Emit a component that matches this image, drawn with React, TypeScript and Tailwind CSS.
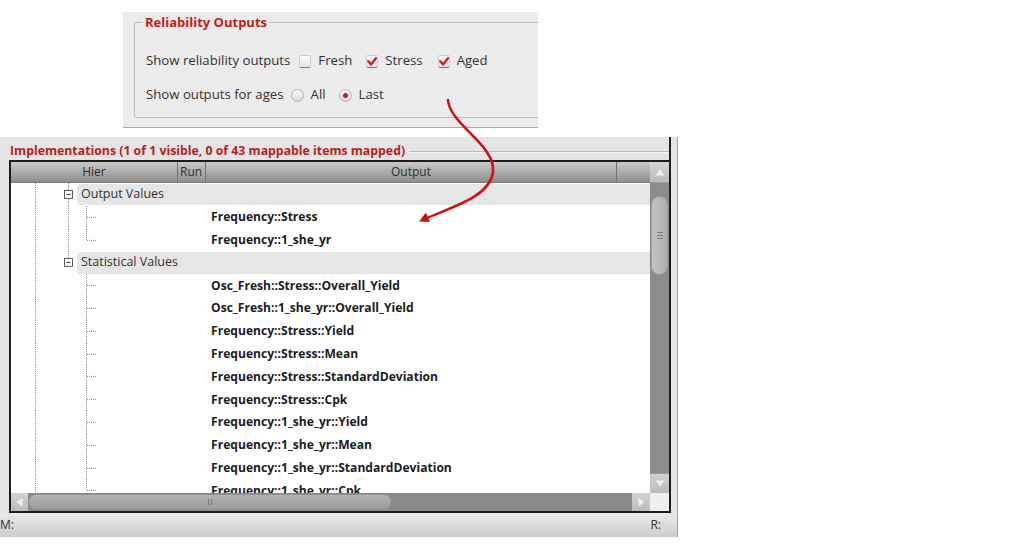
import React from "react";

type Row = { kind: "group" | "child"; text: string; last?: boolean; parentLast?: boolean };

const rows: Row[] = [
  { kind: "group", text: "Output Values", last: false },
  { kind: "child", text: "Frequency::Stress", parentLast: false },
  { kind: "child", text: "Frequency::1_she_yr", parentLast: false, last: true },
  { kind: "group", text: "Statistical Values", last: true },
  { kind: "child", text: "Osc_Fresh::Stress::Overall_Yield", parentLast: true },
  { kind: "child", text: "Osc_Fresh::1_she_yr::Overall_Yield", parentLast: true },
  { kind: "child", text: "Frequency::Stress::Yield", parentLast: true },
  { kind: "child", text: "Frequency::Stress::Mean", parentLast: true },
  { kind: "child", text: "Frequency::Stress::StandardDeviation", parentLast: true },
  { kind: "child", text: "Frequency::Stress::Cpk", parentLast: true },
  { kind: "child", text: "Frequency::1_she_yr::Yield", parentLast: true },
  { kind: "child", text: "Frequency::1_she_yr::Mean", parentLast: true },
  { kind: "child", text: "Frequency::1_she_yr::StandardDeviation", parentLast: true },
  { kind: "child", text: "Frequency::1_she_yr::Cpk", parentLast: true, last: true },
];

const DOT = { stroke: "#8a8a8a", strokeWidth: 1, strokeDasharray: "1 1" };

function CheckBox({ checked }: { checked: boolean }) {
  return (
    <span className="inline-flex items-center justify-center w-[12px] h-[13px] rounded-[2px] border border-[#cfcfcf] border-b-[#7c7c7c] bg-linear-to-b from-[#fbfbfb] to-[#e4e4e4] shrink-0">
      {checked && (
        <svg width="10" height="9" viewBox="0 0 10 9">
          <path d="M1.2 4.2 L4 7.4 L9 1.2" stroke="#d41515" strokeWidth="2.2" fill="none" strokeLinecap="round" />
        </svg>
      )}
    </span>
  );
}

function Radio({ checked }: { checked: boolean }) {
  return (
    <span className="inline-flex items-center justify-center w-[13px] h-[13px] rounded-full border border-[#b4b4b4] bg-linear-to-b from-[#fdfdfd] to-[#dadada] shrink-0">
      {checked && <span className="w-[5px] h-[5px] rounded-full bg-[#d41515]" />}
    </span>
  );
}

function GroupRow({ r }: { r: Row }) {
  return (
    <div className="flex h-[22.8px]">
      <svg width="66" className="h-full shrink-0" viewBox="0 0 66 23" preserveAspectRatio="none">
        <line x1="24.5" y1="0" x2="24.5" y2="23" {...DOT} />
        <line x1="57.5" y1="0" x2="57.5" y2="7" {...DOT} />
        {!r.last && <line x1="57.5" y1="16" x2="57.5" y2="23" {...DOT} />}
        <rect x="53.5" y="7.5" width="8" height="8" fill="#fff" stroke="#5a5a5a" strokeWidth="1" />
        <line x1="55.5" y1="11.5" x2="59.5" y2="11.5" stroke="#333" strokeWidth="1" />
      </svg>
      <div className="flex-1 my-[0.5px] rounded-l-[4px] bg-[#e6e6e6] pl-[4px] flex items-center text-[12.5px] text-[#333]">
        {r.text}
      </div>
    </div>
  );
}

function ChildRow({ r }: { r: Row }) {
  return (
    <div className="flex h-[22.8px] items-center">
      <svg width="200" className="h-full shrink-0" viewBox="0 0 200 23" preserveAspectRatio="none">
        <line x1="24.5" y1="0" x2="24.5" y2="23" {...DOT} />
        {!r.parentLast && <line x1="57.5" y1="0" x2="57.5" y2="23" {...DOT} />}
        <line x1="75.5" y1="0" x2="75.5" y2={r.last ? 11.5 : 23} {...DOT} />
        <line x1="76" y1="11.5" x2="86" y2="11.5" {...DOT} />
      </svg>
      <span className="font-bold text-[12.1px] text-[#1c1c1c] whitespace-nowrap">{r.text}</span>
    </div>
  );
}

function TopPanel() {
  return (
    <div className="ml-[123px] mt-[12px] w-[415px] h-[116px] bg-[#ececec] border-b border-[#a9a9a9] pt-[1px] pl-[11px] overflow-hidden">
      <fieldset className="w-[420px] border border-[#bdbdbd] rounded-[3px] pb-[5px]">
        <legend className="ml-[8px] px-[2px] text-[13px] leading-[18px] font-bold text-[#c81c1c]">Reliability Outputs</legend>
        <div className="pt-[13px] pl-[11px] text-[13.2px] text-[#333]">
          <div className="h-[34px] flex items-center">
            <span>Show reliability outputs</span>
            <span className="ml-[9px] flex"><CheckBox checked={false} /></span>
            <span className="ml-[7px]">Fresh</span>
            <span className="ml-[14px] flex"><CheckBox checked /></span>
            <span className="ml-[7px]">Stress</span>
            <span className="ml-[15px] flex"><CheckBox checked /></span>
            <span className="ml-[7px]">Aged</span>
          </div>
          <div className="h-[34px] flex items-center">
            <span>Show outputs for ages</span>
            <span className="ml-[7px] flex"><Radio checked={false} /></span>
            <span className="ml-[7px]">All</span>
            <span className="ml-[13px] flex"><Radio checked /></span>
            <span className="ml-[7px]">Last</span>
          </div>
        </div>
      </fieldset>
    </div>
  );
}

function VScroll() {
  return (
    <div className="w-[19px] flex flex-col shrink-0">
      <div className="h-[21px] bg-linear-to-b from-[#d4d4d4] to-[#bcbcbc] flex items-center justify-center border-b border-[#9a9a9a]">
        <svg width="10" height="7" viewBox="0 0 10 7"><path d="M5 0.5 L9.5 6.5 L0.5 6.5 Z" fill="#efefef" /></svg>
      </div>
      <div className="flex-1 bg-[#8c8c8c] pt-[13px] px-[1px]">
        <div className="h-[79px] rounded-full bg-linear-to-r from-[#c4c4c4] to-[#aeaeae] border border-[#9c9c9c] flex flex-col items-center justify-center gap-[2px]">
          <span className="w-[6px] h-px bg-[#7c7c7c]" />
          <span className="w-[6px] h-px bg-[#7c7c7c]" />
          <span className="w-[6px] h-px bg-[#7c7c7c]" />
        </div>
      </div>
      <div className="h-[20px] bg-linear-to-b from-[#d0d0d0] to-[#bcbcbc] flex items-center justify-center border-t border-[#9a9a9a]">
        <svg width="10" height="7" viewBox="0 0 10 7"><path d="M0.5 0.5 L9.5 0.5 L5 6.5 Z" fill="#efefef" /></svg>
      </div>
      <div className="h-[18px] bg-[#efefef]" />
    </div>
  );
}

function HScroll() {
  return (
    <div className="h-[18px] flex bg-[#8a8a8a]">
      <div className="w-[17px] bg-linear-to-b from-[#d2d2d2] to-[#bcbcbc] flex items-center justify-center">
        <svg width="7" height="10" viewBox="0 0 7 10"><path d="M0.5 5 L6.5 0.5 L6.5 9.5 Z" fill="#efefef" /></svg>
      </div>
      <div className="w-[364px] my-[1px] rounded-full bg-linear-to-b from-[#b4b4b4] to-[#9c9c9c] border border-[#8f8f8f] flex items-center justify-center gap-[2px]">
        <span className="w-px h-[6px] bg-[#7a7a7a]" />
        <span className="w-px h-[6px] bg-[#7a7a7a]" />
      </div>
      <div className="flex-1" />
      <div className="w-[18px] bg-linear-to-b from-[#d2d2d2] to-[#bcbcbc] flex items-center justify-center">
        <svg width="7" height="10" viewBox="0 0 7 10"><path d="M0.5 0.5 L6.5 5 L0.5 9.5 Z" fill="#efefef" /></svg>
      </div>
    </div>
  );
}

function Header() {
  return (
    <div className="h-[21px] flex bg-linear-to-b from-[#c9c9c9] via-[#acacac] to-[#8e8e8e] text-[12px] text-[#2e2e2e] border-b border-[#7a7a7a]">
      <div className="w-[167px] flex items-center justify-center border-r border-[#727272]">Hier</div>
      <div className="w-[28px] flex items-center pl-[2px] border-r border-[#727272]">Run</div>
      <div className="w-[411px] flex items-center justify-center border-r border-[#727272]">Output</div>
      <div className="flex-1" />
    </div>
  );
}

function Implementations() {
  return (
    <div className="mt-[9px] w-[678px] h-[400px] bg-[#e5e5e5] border-r border-[#a4a4a4] flex flex-col">
      <div className="w-[671px] h-[376px] flex flex-col">
        <div className="h-[23px] flex items-start pt-[5px] pl-[10px] border-r-2 border-[#1f1f1f]">
          <span className="text-[12.3px] leading-[18px] font-bold text-[#b81f1f] whitespace-nowrap">
            Implementations (1 of 1 visible, 0 of 43 mappable items mapped)
          </span>
          <div className="flex-1 ml-[4px] mt-[9px] border-t border-[#bcbcbc] border-b border-b-[#f6f6f6]" />
        </div>
        <div className="ml-[9px] w-[662px] h-[353px] border-2 border-[#1c1c1c] flex">
          <div className="w-[639px] flex flex-col">
            <Header />
            <div className="h-[310px] bg-white overflow-hidden">
              {rows.map((r, i) =>
                r.kind === "group" ? <GroupRow key={i} r={r} /> : <ChildRow key={i} r={r} />
              )}
            </div>
            <HScroll />
          </div>
          <VScroll />
        </div>
      </div>
      <div className="h-[24px] bg-linear-to-b from-[#ececec] to-[#cdcdcd] flex items-center justify-between text-[12px] text-[#333] pr-[16px]">
        <span>M:</span>
        <span>R:</span>
      </div>
    </div>
  );
}

export default function App() {
  return (
    <div className="relative w-[1013px] h-[544px] bg-white overflow-hidden font-['Open_Sans','Noto_Sans',sans-serif]">
      <TopPanel />
      <Implementations />
      <svg className="absolute inset-0 pointer-events-none" width="1013" height="544" viewBox="0 0 1013 544">
        <path d="M448 100 C450 125 496 145 493 172 C490 196 455 206 427 218" stroke="#cc1414" strokeWidth="2.6" fill="none" strokeLinecap="round" />
        <path d="M419 221.5 L430 222 L426 212.5 Z" fill="#cc1414" />
      </svg>
    </div>
  );
}
